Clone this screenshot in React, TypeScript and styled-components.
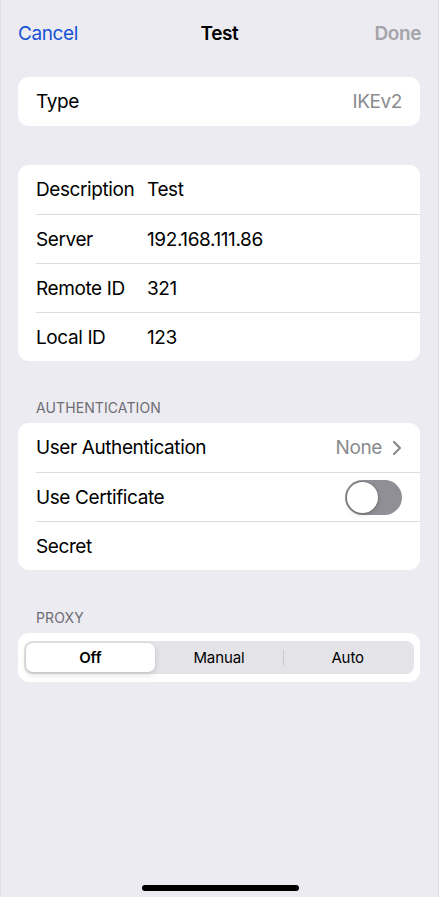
import React from "react";
import styled, { createGlobalStyle } from "styled-components";

const Global = createGlobalStyle`
  html, body { margin: 0; padding: 0; background: #ecebf1; }
  body { font-family: "Inter", "Liberation Sans", sans-serif; -webkit-font-smoothing: antialiased; }
  * { box-sizing: border-box; }
`;

const Screen = styled.div`
  width: 439px;
  height: 897px;
  background: #ecebf1;
  border-left: 1px solid #dcdce1;
  border-right: 1px solid #dcdce1;
  display: flex;
  flex-direction: column;
  position: relative;
  overflow: hidden;
`;

const NavBar = styled.div`
  height: 66px;
  display: grid;
  grid-template-columns: 1fr auto 1fr;
  align-items: center;
  padding: 0 17px 0 17px;
  font-size: 19px;
  letter-spacing: -0.4px;
`;

const NavButton = styled.span<{ $disabled?: boolean; $right?: boolean }>`
  color: ${(p) => (p.$disabled ? "#a4a4a9" : "#1552d4")};
  font-weight: ${(p) => (p.$disabled ? 600 : 400)};
  justify-self: ${(p) => (p.$right ? "end" : "start")};
`;

const NavTitle = styled.span`
  font-weight: 600;
  color: #000;
`;

const Content = styled.div`
  padding: 11px 18px 0 17px;
  display: flex;
  flex-direction: column;
`;

const Card = styled.div<{ $gap?: number }>`
  background: #fff;
  border-radius: 11px;
  margin-top: ${(p) => p.$gap ?? 0}px;
  overflow: hidden;
`;

const Row = styled.div`
  height: 49px;
  display: flex;
  align-items: center;
  margin-left: 18px;
  padding-right: 18px;
  font-size: 19px;
  letter-spacing: -0.4px;
  color: #000;
  & + & {
    border-top: 1px solid #dcdcdf;
  }
`;

const Label = styled.span<{ $w?: number }>`
  width: ${(p) => (p.$w ? `${p.$w}px` : "auto")};
  flex-shrink: 0;
`;

const Value = styled.span`
  flex: 1;
`;

const Detail = styled.span`
  margin-left: auto;
  color: #8a8a8e;
  display: flex;
  align-items: center;
  gap: 10px;
`;

const SectionHeader = styled.div<{ $gap: number }>`
  margin-top: ${(p) => p.$gap}px;
  padding: 0 0 7px 18px;
  font-size: 14px;
  color: #6d6d72;
  letter-spacing: 0.1px;
`;

const Toggle = styled.div`
  margin-left: auto;
  width: 57px;
  height: 35px;
  border-radius: 18px;
  background: #908f95;
  padding: 2px;
  display: flex;
  align-items: center;
`;

const Knob = styled.div`
  width: 31px;
  height: 31px;
  border-radius: 50%;
  background: #fff;
  box-shadow: 0 0 0 1px rgba(0, 0, 0, 0.12), 0 2px 4px rgba(0, 0, 0, 0.15);
`;

const SegmentCard = styled(Card)`
  padding: 8px 6px;
`;

const Segmented = styled.div`
  height: 33px;
  border-radius: 8px;
  background: #e3e3e8;
  padding: 2px;
  display: grid;
  grid-template-columns: repeat(3, 1fr);
  align-items: center;
`;

const Segment = styled.div<{ $active?: boolean; $divider?: boolean }>`
  height: 29px;
  display: flex;
  align-items: center;
  justify-content: center;
  font-size: 15px;
  letter-spacing: -0.1px;
  font-weight: ${(p) => (p.$active ? 600 : 400)};
  color: #000;
  border-radius: 7px;
  background: ${(p) => (p.$active ? "#fff" : "transparent")};
  box-shadow: ${(p) =>
    p.$active ? "0 0 0 0.5px rgba(0,0,0,0.06), 0 3px 6px rgba(0,0,0,0.12)" : "none"};
  position: relative;
  ${(p) =>
    p.$divider
      ? `&::before { content: ""; position: absolute; left: 0; top: 7px; bottom: 7px; width: 1px; background: #c7c7cc; }`
      : ""}
`;

const HomeIndicator = styled.div`
  position: absolute;
  left: 141px;
  bottom: 6px;
  width: 157px;
  height: 6px;
  border-radius: 3px;
  background: #000;
`;

const Chevron = () => (
  <svg width="10" height="16" viewBox="0 0 10 16" fill="none">
    <path d="M2 2l6 6-6 6" stroke="#8a8a8e" strokeWidth="2.2" strokeLinecap="round" strokeLinejoin="round" />
  </svg>
);

export default function App() {
  return (
    <>
      <Global />
      <Screen>
        <NavBar>
          <NavButton>Cancel</NavButton>
          <NavTitle>Test</NavTitle>
          <NavButton $disabled $right>Done</NavButton>
        </NavBar>
        <Content>
          <Card>
            <Row>
              <Label>Type</Label>
              <Detail>IKEv2</Detail>
            </Row>
          </Card>

          <Card $gap={39}>
            <Row>
              <Label $w={111}>Description</Label>
              <Value>Test</Value>
            </Row>
            <Row>
              <Label $w={111}>Server</Label>
              <Value>192.168.111.86</Value>
            </Row>
            <Row>
              <Label $w={111}>Remote ID</Label>
              <Value>321</Value>
            </Row>
            <Row>
              <Label $w={111}>Local ID</Label>
              <Value>123</Value>
            </Row>
          </Card>

          <SectionHeader $gap={38}>AUTHENTICATION</SectionHeader>
          <Card>
            <Row>
              <Label>User Authentication</Label>
              <Detail>
                None <Chevron />
              </Detail>
            </Row>
            <Row>
              <Label>Use Certificate</Label>
              <Toggle>
                <Knob />
              </Toggle>
            </Row>
            <Row>
              <Label>Secret</Label>
            </Row>
          </Card>

          <SectionHeader $gap={39}>PROXY</SectionHeader>
          <SegmentCard>
            <Segmented>
              <Segment $active>Off</Segment>
              <Segment>Manual</Segment>
              <Segment $divider>Auto</Segment>
            </Segmented>
          </SegmentCard>
        </Content>
        <HomeIndicator />
      </Screen>
    </>
  );
}
